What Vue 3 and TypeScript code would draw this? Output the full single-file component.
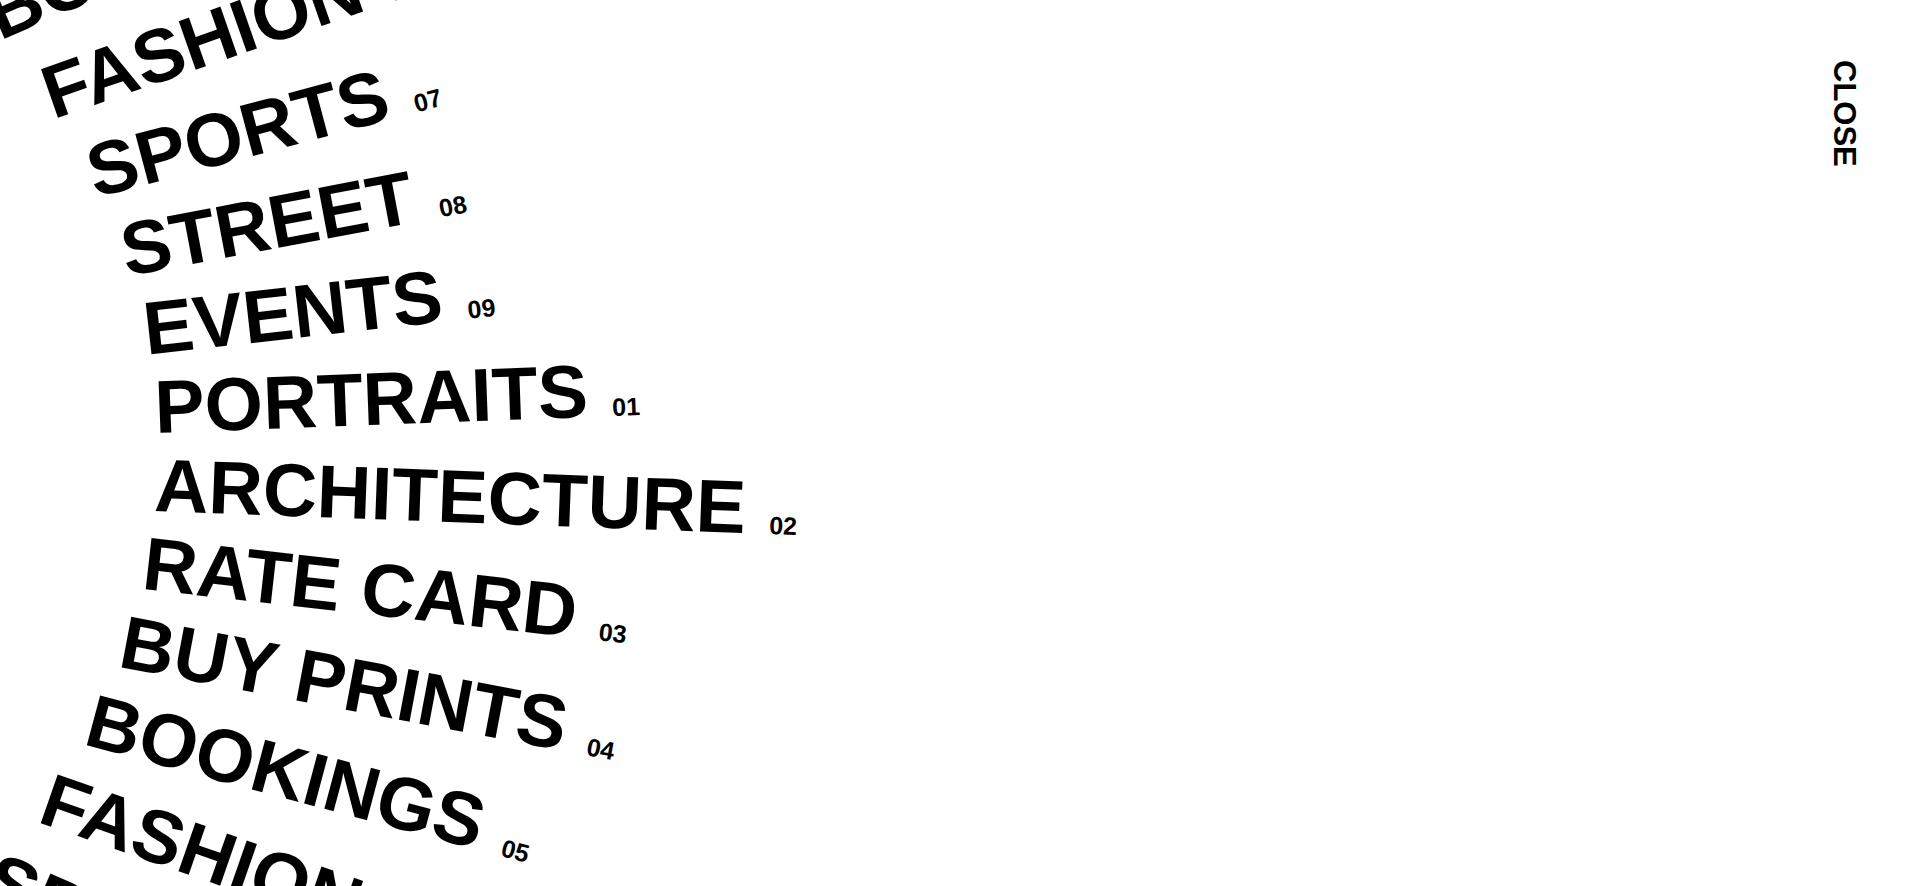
<script setup lang="ts">
interface Category {
  label: string
  number: string
}

const categories: Category[] = [
  { label: 'PORTRAITS', number: '01' },
  { label: 'ARCHITECTURE', number: '02' },
  { label: 'RATE CARD', number: '03' },
  { label: 'BUY PRINTS', number: '04' },
  { label: 'BOOKINGS', number: '05' },
  { label: 'FASHION', number: '06' },
  { label: 'SPORTS', number: '07' },
  { label: 'STREET', number: '08' },
  { label: 'EVENTS', number: '09' },
]

const VISIBLE = 12
const FIRST = 4
const DEGREES_PER_ROW = 4.27
const BEND = 5.5

// The wheel loops through the categories; rows tilt and recede away from the middle.
const rows = Array.from({ length: VISIBLE }, (_, index) => {
  const distance = index - (VISIBLE - 1) / 2
  const shift = -BEND * distance * distance
  return {
    ...categories[(FIRST + index) % categories.length],
    key: index,
    style: { transform: `translateX(${shift}px) rotate(${distance * DEGREES_PER_ROW}deg)` },
  }
})
</script>

<template>
  <main class="menu">
    <nav class="wheel" aria-label="Categories">
      <ul class="rows">
        <li v-for="row in rows" :key="row.key" class="row" :style="row.style">
          <a class="link" href="#">
            <span class="label">{{ row.label }}</span>
            <span class="number">{{ row.number }}</span>
          </a>
        </li>
      </ul>
    </nav>
    <button class="close" type="button">CLOSE</button>
  </main>
</template>

<style>
body {
  margin: 0;
  background: #fff;
}
</style>

<style scoped>
.menu {
  display: flex;
  justify-content: space-between;
  align-items: flex-start;
  height: 100vh;
  overflow: hidden;
  color: #000;
  font-family: Arial, "Liberation Sans", sans-serif;
  font-weight: 700;
}

.wheel {
  display: flex;
  align-items: center;
  box-sizing: border-box;
  height: 100%;
  padding: 6px 0 0 156px;
}

.rows {
  margin: 0;
  padding: 0;
  list-style: none;
}

.row {
  height: 78px;
  line-height: 78px;
  transform-origin: left center;
  white-space: nowrap;
}

.link {
  display: inline-flex;
  align-items: baseline;
  gap: 24px;
  color: inherit;
  text-decoration: none;
}

.label {
  font-size: 75px;
}

.number {
  font-size: 25px;
}

.close {
  margin: 60px 58px 0 0;
  padding: 0;
  border: 0;
  background: none;
  color: inherit;
  font: inherit;
  font-size: 31px;
  line-height: 36px;
  writing-mode: vertical-rl;
  cursor: pointer;
}
</style>
